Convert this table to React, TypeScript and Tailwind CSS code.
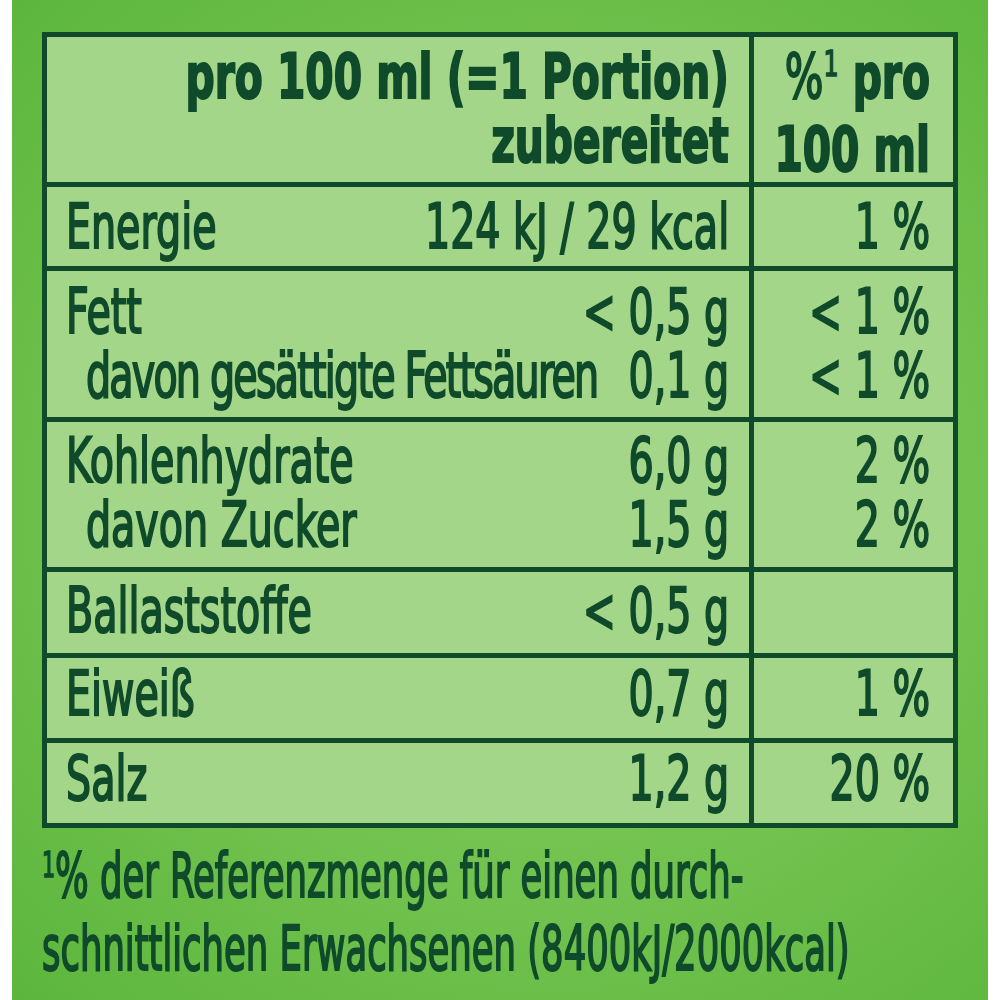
import React from "react"

type Line = { label: string; value: string; pct?: string; indent?: boolean; tight?: boolean }

interface RowProps {
  lines: Line[]
  h: string
  pt: string
}

// DejaVu Sans Condensed is wider than the label's font, so each cell's text block is squeezed horizontally
const squeeze = "origin-left scale-x-[0.71]"

function Row({ lines, h, pt }: RowProps) {
  return (
    <div className={`flex border-t-[5px] border-[#0f4a2b] ${h}`}>
      <div className={`w-[707px] shrink-0 border-r-[5px] border-[#0f4a2b] pl-[19px] ${pt}`}>
        <div className={`w-[934px] ${squeeze}`}>
          {lines.map((l) => (
            <div key={l.label} className="flex justify-between whitespace-nowrap">
              <span className={`${l.indent ? "pl-[28px]" : ""} ${l.tight ? "tracking-[-2.5px]" : ""}`}>{l.label}</span>
              <span>{l.value}</span>
            </div>
          ))}
        </div>
      </div>
      <div className={`w-[199px] shrink-0 ${pt}`}>
        <div className={`w-[248px] text-right ${squeeze}`}>
          {lines.map((l) => (
            <div key={l.label} className="whitespace-nowrap">
              {l.pct ?? "\u00a0"}
            </div>
          ))}
        </div>
      </div>
    </div>
  )
}

export default function App() {
  return (
    <div className="h-[1000px] w-full overflow-hidden bg-white px-[12px]">
      <div className="h-full bg-[radial-gradient(ellipse_at_55%_50%,#86cc62_0%,#72c24f_55%,#5cb63c_100%)] pt-[32px] font-['DejaVu_Sans_Condensed','DejaVu_Sans',sans-serif] text-[62px] leading-[64px] text-[#0f4a2b] [-webkit-text-stroke:2px_#0f4a2b]">
        <div className="ml-[30px] w-[916px] border-[5px] border-[#0f4a2b] bg-[#a3d688]">
          {/* Kopfzeile */}
          <div className="flex h-[145px] font-bold [-webkit-text-stroke:2px_#0f4a2b]">
            <div className="w-[707px] shrink-0 border-r-[5px] border-[#0f4a2b] pt-[8px]">
              <div className="w-[934px] origin-left scale-x-[0.73] text-right whitespace-nowrap">
                <div>pro 100 ml (=1 Portion)</div>
                <div>zubereitet</div>
              </div>
            </div>
            <div className="w-[199px] shrink-0 pt-[8px]">
              <div className="w-[241px] origin-left scale-x-[0.73] text-right whitespace-nowrap">
                <div>
                  <span className="font-normal">%</span>
                  <span className="relative top-[-22px] text-[36px] font-normal [-webkit-text-stroke:1.5px_#0f4a2b]">1</span> pro
                </div>
                <div>100 ml</div>
              </div>
            </div>
          </div>

          <Row h="h-[84px]" pt="pt-[8px]" lines={[{ label: "Energie", value: "124 kJ / 29 kcal", pct: "1 %" }]} />
          <Row
            h="h-[151px]"
            pt="pt-[9px]"
            lines={[
              { label: "Fett", value: "< 0,5 g", pct: "< 1 %" },
              { label: "davon gesättigte Fettsäuren", value: "0,1 g", pct: "< 1 %", indent: true, tight: true },
            ]}
          />
          <Row
            h="h-[150px]"
            pt="pt-[7px]"
            lines={[
              { label: "Kohlenhydrate", value: "6,0 g", pct: "2 %" },
              { label: "davon Zucker", value: "1,5 g", pct: "2 %", indent: true },
            ]}
          />
          <Row h="h-[86px]" pt="pt-[7px]" lines={[{ label: "Ballaststoffe", value: "< 0,5 g" }]} />
          <Row h="h-[85px]" pt="pt-[4px]" lines={[{ label: "Eiweiß", value: "0,7 g", pct: "1 %" }]} />
          <Row h="h-[85px]" pt="pt-[4px]" lines={[{ label: "Salz", value: "1,2 g", pct: "20 %" }]} />
        </div>

        {/* Fußnote */}
        <div className="ml-[30px] mt-[16px]">
          <p className="w-[1240px] origin-left scale-x-[0.635] whitespace-nowrap">
            <span className="relative top-[-20px] text-[36px] [-webkit-text-stroke:1.5px_#0f4a2b]">1</span>% der Referenzmenge für einen durch-
            <br />
            schnittlichen Erwachsenen (8400kJ/2000kcal)
          </p>
        </div>
      </div>
    </div>
  )
}
